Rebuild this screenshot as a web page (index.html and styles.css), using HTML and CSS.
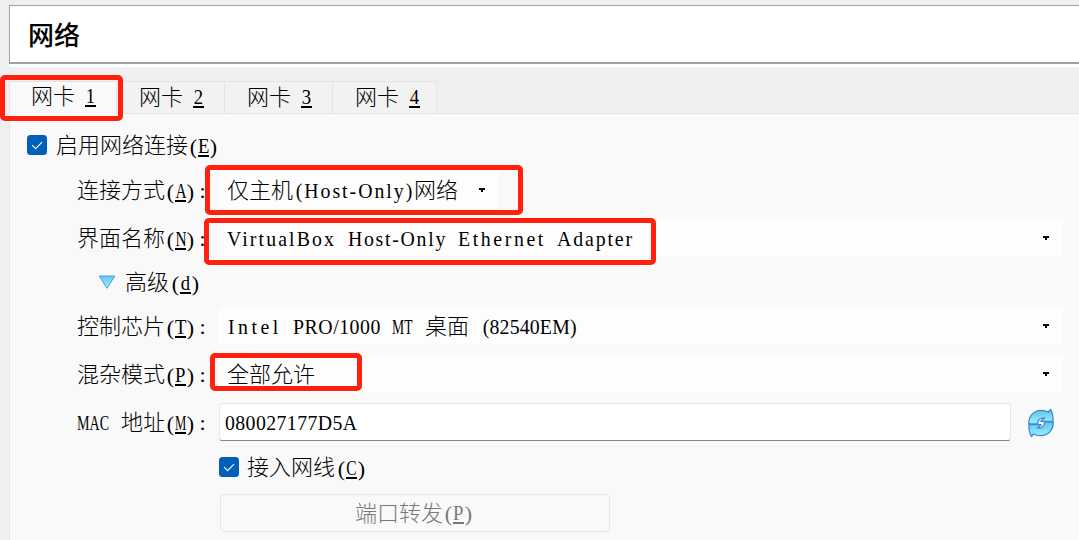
FILE: index.html
```html
<!DOCTYPE html>
<html lang="zh-CN">
<head>
<meta charset="utf-8">
<title>网络</title>
<link rel="stylesheet" href="styles.css">
</head>
<body>
<main class="window">
  <header class="title"><h1>网络</h1></header>
  <nav class="tabs">
    <div class="tab active">网卡<u><i>1</i></u></div>
    <div class="tab">网卡<u><i>2</i></u></div>
    <div class="tab">网卡<u><i>3</i></u></div>
    <div class="tab">网卡<u><i>4</i></u></div>
  </nav>
  <section class="panel">
    <div class="enable">
      <svg class="check" viewBox="0 0 20 20"><rect width="20" height="20" rx="3.5"/><path d="M5.2 10.2 8.6 13.6 15 7.2"/></svg>
      <span>启用网络连接</span><span class="key">(<u><i>E</i></u>)</span>
    </div>
    <div class="row">
      <label class="label">连接方式<span class="key wide">(<u><i>A</i></u>)</span><span class="colon">:</span></label>
      <div class="combo short">仅主机<span class="lat host">(Host-Only)</span>网络<svg class="arrow" viewBox="0 0 6 4"><path d="M0 0H6V2H4V4H2V2H0Z"/></svg></div>
    </div>
    <div class="row">
      <label class="label">界面名称<span class="key wide">(<u><i>N</i></u>)</span><span class="colon">:</span></label>
      <div class="combo"><span class="lat w10">VirtualBox</span><span class="lat w9">Host-Only</span><span class="lat w8">Ethernet</span><span class="lat w7">Adapter</span><svg class="arrow" viewBox="0 0 6 4"><path d="M0 0H6V2H4V4H2V2H0Z"/></svg></div>
    </div>
    <div class="advanced">
      <svg class="triangle" viewBox="0 0 18 15"><defs><linearGradient id="tri" x2="0" y2="1"><stop stop-color="#62c5f4"/><stop offset="1" stop-color="#a5f2ff"/></linearGradient></defs><path d="M1.2 1H16.8L9 13.3Z" fill="url(#tri)" stroke="#4a9fe0" stroke-linejoin="round"/></svg>
      <span>高级</span><span class="key">(<u><i>d</i></u>)</span>
    </div>
    <div class="row">
      <label class="label">控制芯片<span class="key">(<u><i>T</i></u>)</span><span class="colon">:</span></label>
      <div class="combo"><span class="lat intel">Intel</span><span class="lat pro">PRO/1000</span><span class="lat mt">MT</span>桌面<span class="lat chip">(82540EM)</span><svg class="arrow" viewBox="0 0 6 4"><path d="M0 0H6V2H4V4H2V2H0Z"/></svg></div>
    </div>
    <div class="row">
      <label class="label">混杂模式<span class="key">(<u><i>P</i></u>)</span><span class="colon">:</span></label>
      <div class="combo">全部允许<svg class="arrow" viewBox="0 0 6 4"><path d="M0 0H6V2H4V4H2V2H0Z"/></svg></div>
    </div>
    <div class="row">
      <label class="label"><span class="lat mac">MAC</span>地址<span class="key widest">(<u><i>M</i></u>)</span><span class="colon">:</span></label>
      <div class="field"><span class="lat address">080027177D5A</span></div>
      <svg class="refresh" viewBox="0 0 28 30"><defs><linearGradient id="ref" x2="0" y2="1"><stop stop-color="#62c2f0"/><stop offset="1" stop-color="#9df0ff"/></linearGradient></defs><g fill="url(#ref)" stroke="#3c89cc" stroke-width="1.3" stroke-linejoin="round"><path d="M1.800 15.800C1.600 8.500 6.500 2.600 14 2.400c3.400 0 5.800.6 7.600 1.600L23.600 1.500C25.600 5 26.200 9 26 13.300H13.800L17.600 9.800C13.500 9.600 10.800 11.500 10.500 15.800Z"/><path d="M26.200 14.200C26.400 21.500 21.500 27.400 14 27.600c-3.400 0-5.800-.6-7.600-1.600L4.400 28.500C2.400 25 1.800 21 2 16.700H14.200L10.400 20.200C14.500 20.400 17.200 18.500 17.500 14.200Z"/></g></svg>
    </div>
    <div class="cable">
      <svg class="check" viewBox="0 0 20 20"><rect width="20" height="20" rx="3.5"/><path d="M5.2 10.2 8.6 13.6 15 7.2"/></svg>
      <span>接入网线</span><span class="key wide">(<u><i>C</i></u>)</span>
    </div>
    <div class="forward">端口转发<span class="key">(<u><i>P</i></u>)</span></div>
  </section>
  <div class="mark mark-tab"></div>
  <div class="mark mark-mode"></div>
  <div class="mark mark-name"></div>
  <div class="mark mark-allow"></div>
</main>
</body>
</html>
```
FILE: styles.css
```css
* { box-sizing: border-box; }
body {
  margin: 0;
  background: #efefef;
  color: #000;
  font: 300 22px/26px "Liberation Serif", "Noto Sans CJK SC", sans-serif;
}
.window { position: relative; height: 540px; padding: 5px 0 0 9px; overflow: hidden; }
.title {
  display: flex; align-items: center;
  height: 59px; padding: 0 0 0 18px;
  background: #fff;
  border: 1px solid #a0a0a0; border-width: 1px 0 2px 1px;
  box-shadow: 0 3px #fff;
}
h1 { margin: 0; font: 500 26px/36px "Noto Sans CJK SC", sans-serif; }

.tabs { display: flex; height: 32px; margin-top: 17px; }
.tab {
  display: flex; align-items: center; gap: 10px;
  width: 108px; height: 33px; padding: 0 0 0 22px;
  background: #f2f2f2;
  border: 1px solid #e5e5e5; border-left: 0;
}
.tab.active { background: #f9f9f9; border-left: 1px solid #e5e5e5; border-bottom-color: #f9f9f9; padding-left: 21px; padding-bottom: 2px; z-index: 1; }
.tab:last-child { width: 104px; }
u { display: flex; justify-content: center; width: 11px; height: 21px; line-height: 20px; border-bottom: 2px solid currentColor; text-decoration: none; }

.panel {
  display: flex; flex-direction: column;
  height: 427px; padding: 12px 0 0 17px;
  background: #f9f9f9;
  border: 1px solid #e5e5e5; border-width: 1px 0 0 1px;
}
.enable, .advanced, .cable, .label, .combo, .field, .forward, .row { display: flex; align-items: center; }
.enable { height: 38px; margin-bottom: 7px; }
.check { width: 20px; height: 20px; margin-right: 9px; fill: #005fb8; }
.check path { fill: none; stroke: #fff; stroke-width: 1.1; }
.enable span, .advanced span, .label { padding-top: 2px; }
.key { display: grid; grid-template-columns: 9px 11px 9px; justify-items: center; width: 31px; margin-left: 1px; line-height: 21px; }
i { font-style: normal; transform: scaleX(.85); }
.key.wide i { transform: scaleX(.7); }
.key.widest i { transform: scaleX(.58); }
.colon { width: 11px; text-align: center; line-height: 22px; }

.row { height: 38px; margin-bottom: 10px; }
.label { width: 142px; height: 38px; margin-left: 50px; }
.combo { width: 844px; height: 38px; padding: 2px 14px 0 8px; background: #fdfdfd; border-radius: 2px; }
.arrow { width: 6px; height: 4px; margin-left: auto; margin-bottom: 3px; }
.combo.short { width: 280px; }

/* Latin runs occupy a fixed half-width cell per character */
.lat { display: block; height: 24px; line-height: 24px; white-space: nowrap; transform: scaleX(.9); transform-origin: left; }
.host { width: 121px; letter-spacing: 2.2px; padding-left: 3px; }
.w10 { width: 121px; letter-spacing: 2.35px; }
.w9 { width: 110px; letter-spacing: 1.9px; }
.w8 { width: 99px; letter-spacing: 2.9px; }
.w7 { width: 77px; letter-spacing: 2.1px; }
.intel { width: 66px; letter-spacing: 3.9px; padding-left: 1px; }
.pro { width: 99px; letter-spacing: .6px; }
.mt { width: 33px; transform: scaleX(.62); }
.chip { width: 99px; margin-left: 11px; padding-left: 3px; letter-spacing: .2px; }
.mac { width: 44px; transform: scaleX(.64); }
.address { width: 132px; letter-spacing: .45px; }

.advanced { height: 50px; margin: -10px 0 0 71px; }
.triangle { width: 18px; height: 15px; margin-right: 9px; }
.advanced .key { margin-left: 2px; }
.field {
  width: 792px; height: 38px; padding: 2px 0 0 5px;
  background: #fff; border: 1px solid #e7e7e7; border-bottom-color: #868686; border-radius: 3px;
}
.refresh { width: 28px; height: 30px; margin: 2px 0 0 16px; }
.cable { height: 52px; margin: -10px 0 1px 192px; }
.cable .check { margin-right: 8px; }
.cable span { padding-top: 2px; }
.cable .key { margin-left: 2px; }
.forward {
  justify-content: center;
  width: 390px; height: 38px; margin-left: 193px; padding-top: 1px;
  border: 1px solid #e7e7e7; border-radius: 4px;
  color: #787878;
}

.mark { position: absolute; z-index: 2; border: 5px solid #ff2010; border-radius: 5px; }
.mark-tab { left: 0; top: 75px; width: 123px; height: 46px; }
.mark-mode { left: 205px; top: 165px; width: 318px; height: 50px; }
.mark-name { left: 204px; top: 218px; width: 452px; height: 47px; }
.mark-allow { left: 210px; top: 353px; width: 152px; height: 38px; }
```
